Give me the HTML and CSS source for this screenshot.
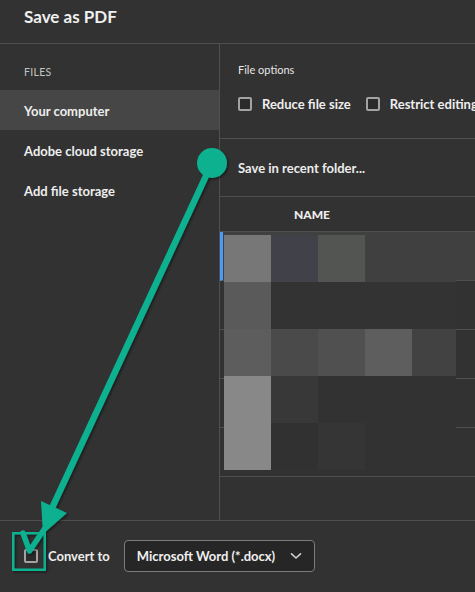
FILE: index.html
```html
<!DOCTYPE html>
<html lang="en">
<head>
<meta charset="utf-8">
<title>Save as PDF</title>
<link rel="stylesheet" href="styles.css">
</head>
<body>
<div class="dialog">
  <header class="header"><h1 class="title">Save as PDF</h1></header>
  <div class="main">
    <nav class="sidebar">
      <div class="side-label">FILES</div>
      <div class="side-item selected">Your computer</div>
      <div class="side-item">Adobe cloud storage</div>
      <div class="side-item">Add file storage</div>
    </nav>
    <section class="content">
      <div class="options">
        <div class="options-title">File options</div>
        <div class="options-row">
          <label class="check"><span class="box"></span><span>Reduce file size</span></label>
          <label class="check"><span class="box"></span><span>Restrict editing</span></label>
        </div>
      </div>
      <div class="recent">Save in recent folder...</div>
      <div class="table-head"><span class="col-name">NAME</span></div>
      <div class="table">
        <div class="row active"></div>
        <div class="row"></div>
        <div class="row"></div>
        <div class="row"></div>
        <div class="row"></div>
        <div class="mosaic">
          <i style="background:#777777"></i><i style="background:#41414a"></i><i style="background:#535553"></i><i style="background:#404040"></i><i style="background:#404040"></i>
          <i style="background:#5a5a5a"></i><i style="background:#333333"></i><i style="background:#333333"></i><i style="background:#333333"></i><i style="background:#333333"></i>
          <i style="background:#5d5d5d"></i><i style="background:#4a4a4a"></i><i style="background:#505050"></i><i style="background:#5e5e5e"></i><i style="background:#424242"></i>
          <i style="background:#888888"></i><i style="background:#383838"></i><i style="background:#323232"></i><i style="background:#323232"></i><i style="background:#323232"></i>
          <i style="background:#888888"></i><i style="background:#313131"></i><i style="background:#353535"></i><i style="background:#323232"></i><i style="background:#323232"></i>
        </div>
      </div>
    </section>
  </div>
  <footer class="footer">
    <label class="check footer-check"><span class="box"></span><span>Convert to</span></label>
    <div class="select">
      <span>Microsoft Word (*.docx)</span>
      <svg class="chev" width="12" height="8" viewBox="0 0 12 8"><path d="M1.5 1.8 L6 6 L10.5 1.8" fill="none" stroke="#d0d0d0" stroke-width="1.6" stroke-linecap="round" stroke-linejoin="round"/></svg>
    </div>
  </footer>
  <svg class="annot" width="475" height="592" viewBox="0 0 475 592">
    <defs>
      <filter id="sh" x="-20%" y="-20%" width="140%" height="140%">
        <feDropShadow dx="1.5" dy="1.5" stdDeviation="1.2" flood-color="#000" flood-opacity="0.45"/>
      </filter>
    </defs>
    <g filter="url(#sh)" fill="#0bb08f" stroke="#0bb08f">
      <rect x="13.25" y="533.25" width="31.5" height="36.5" fill="none" stroke-width="2.5"/>
      <line x1="212" y1="163" x2="52" y2="508" stroke-width="6.5"/>
      <circle cx="212" cy="163" r="15" stroke="none"/>
      <polygon points="41,501 67,513 43,534" stroke="none"/>
      <path d="M23 533 L29.5 551 L45 528" fill="none" stroke-width="5.5" stroke-linecap="round" stroke-linejoin="round"/>
    </g>
  </svg>
</div>
</body>
</html>
```
FILE: styles.css
```css
* { box-sizing: border-box; }
html, body { margin: 0; padding: 0; }
body {
  background: #323232;
  color: #ececec;
  font-family: Lato, "Open Sans", "Liberation Sans", sans-serif;
  width: 475px;
  height: 592px;
  overflow: hidden;
}
.dialog {
  position: relative;
  width: 475px;
  height: 592px;
  display: flex;
  flex-direction: column;
}
.header {
  height: 44px;
  border-bottom: 1px solid #4f4f4f;
  padding: 4px 0 0 24px;
  flex: none;
}
.title {
  margin: 0;
  font-size: 17px;
  font-weight: 700;
  line-height: 26px;
  color: #f0f0f0;
}
.main {
  height: 477px;
  flex: none;
  display: flex;
  border-bottom: 1px solid #4f4f4f;
}
.sidebar {
  width: 220px;
  flex: none;
  border-right: 1px solid #4f4f4f;
}
.side-label {
  height: 46px;
  padding: 20px 0 0 24px;
  font-size: 10.5px;
  line-height: 16px;
  letter-spacing: 0.3px;
  color: #c4c4c4;
}
.side-item {
  height: 40px;
  display: flex;
  align-items: center;
  padding: 2px 0 0 24px;
  font-size: 13px;
  font-weight: 700;
  color: #eeeeee;
}
.side-item.selected { background: #464646; }
.content {
  flex: 1;
  min-width: 0;
  display: flex;
  flex-direction: column;
  overflow: hidden;
}
.options {
  height: 95px;
  border-bottom: 1px solid #4f4f4f;
  padding: 18px 0 0 18px;
  flex: none;
}
.options-title {
  font-size: 11px;
  line-height: 16px;
  color: #e6e6e6;
}
.options-row {
  margin-top: 18px;
  display: flex;
  gap: 15px;
  white-space: nowrap;
}
.check {
  display: flex;
  align-items: center;
  gap: 10px;
  font-size: 13px;
  font-weight: 700;
  line-height: 16px;
  color: #eeeeee;
}
.box {
  width: 14px;
  height: 14px;
  border: 2px solid #a3a3a3;
  border-radius: 2px;
  background: #2b2b2b;
  flex: none;
}
.recent {
  height: 58px;
  border-bottom: 1px solid #4f4f4f;
  padding-left: 18px;
  display: flex;
  align-items: center;
  font-size: 13px;
  font-weight: 700;
  flex: none;
}
.table-head {
  height: 35px;
  border-bottom: 1px solid #4f4f4f;
  padding-left: 74px;
  display: flex;
  align-items: center;
  flex: none;
}
.col-name {
  font-size: 12px;
  font-weight: 900;
  color: #eeeeee;
}
.table {
  position: relative;
  flex: 1;
}
.row {
  height: 49px;
  border-bottom: 1px solid #4f4f4f;
}
.row.active {
  background: #404040;
  border-left: 3px solid #4b9cf6;
}
.mosaic {
  position: absolute;
  left: 4px;
  top: 3px;
  display: grid;
  grid-template-columns: 47px 47px 47px 47px 44px;
  grid-auto-rows: 47px;
}
.mosaic i { display: block; }
.footer {
  flex: 1;
  display: flex;
  align-items: center;
  padding: 0 0 2px 24px;
}
.footer-check { gap: 10px; }
.select {
  margin-left: 14px;
  width: 191px;
  height: 32px;
  border: 1px solid #7c7c7c;
  border-radius: 4px;
  background: #262626;
  display: flex;
  align-items: center;
  justify-content: space-between;
  padding: 0 12px 0 12px;
  font-size: 13px;
  font-weight: 700;
  color: #f0f0f0;
}
.chev { display: block; }
.annot {
  position: absolute;
  left: 0;
  top: 0;
  pointer-events: none;
}
```
